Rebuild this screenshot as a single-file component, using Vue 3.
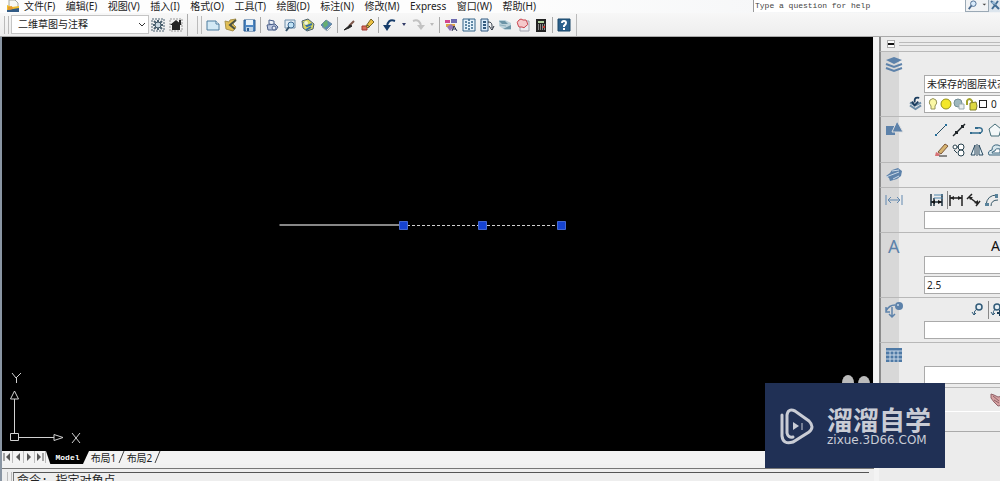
<script setup>
import { ref } from 'vue'

const menus = ['文件(F)', '编辑(E)', '视图(V)', '插入(I)', '格式(O)', '工具(T)', '绘图(D)', '标注(N)', '修改(M)', 'Express', '窗口(W)', '帮助(H)']
const workspace = ref('二维草图与注释')
const layerState = ref('未保存的图层状态')
const question = ref('')
const textHeight = ref('2.5')

const tools = [
  { name: '新建', art: '<path d="M2 4h9l3 3v6H2z" fill="#d3e9f5" stroke="#4d7d9f"/><path d="M11 4v3h3" fill="#fff" stroke="#4d7d9f"/>' },
  { name: '打开', art: '<path d="M2 4l4 1 1-2 6-1-3 5 3 3-3 4-7-2z" fill="#e2bf55" stroke="#a8924a"/><path d="M13 3L7 8l5 4" fill="none" stroke="#4c5244" stroke-width="2"/>' },
  { name: '保存', art: '<path d="M3 3h11v11H3z" fill="#4d86c2" stroke="#285a90"/><path d="M5 3h7v5H5z" fill="#e8f2fa"/><path d="M5 10h7v4H5z" fill="#bdd4e9"/><path d="M6 11h2v3H6z" fill="#285a90"/>' },
  { sep: true },
  { name: '打印', art: '<path d="M5 3l5 1v4L5 7z" fill="#eef3fa" stroke="#495e89"/><path d="M3 8l8-1 3 3-2 3H4z" fill="#b9c5df" stroke="#495e89"/><circle cx="10" cy="11" r="2" fill="#e3e8f3" stroke="#495e89"/>' },
  { name: '打印预览', art: '<path d="M3 3h10v8H3z" fill="#e3edf5" stroke="#6f8faa"/><circle cx="9" cy="8" r="3" fill="#c2e3f5" stroke="#3d6a94"/><path d="M7 10l-3 4" stroke="#35546e" stroke-width="2"/>' },
  { name: '发布', art: '<path d="M2 4l6-2 6 5-1 5-6 2-4-3z" fill="#d7d65d" stroke="#4d6172"/><path d="M4 5l3 4 5-2M6 13l5-3" fill="none" stroke="#356fa5" stroke-width="2"/><circle cx="6" cy="6" r="2" fill="#f4f7d0"/>' },
  { name: '三维 DWF', art: '<path d="M8 3l6 4-6 6-5-5z" fill="#5c8fb2" stroke="#6c87a3"/><path d="M5 6l4-3 1 5-4 3z" fill="#67ae72"/><path d="M4 10l5 4 4-4" fill="none" stroke="#a1b2bd"/>' },
  { sep: true },
  { name: '特性匹配', art: '<path d="M13 4L8 9" stroke="#7b5549" stroke-width="2"/><path d="M9 8l-6 5 5-2 3-2z" fill="#222" stroke="#222"/>' },
  { name: '块编辑器', art: '<path d="M3 9h5v4H3z" fill="#d9705a" stroke="#9f3833"/><path d="M7 9l5-7 3 3-6 6z" fill="#ecc143" stroke="#76662a"/><path d="M8 8l3 2" stroke="#444"/>' },
  { sep: true },
  { name: '放弃', art: '<path d="M13 4c-5-2-8 1-8 6" fill="none" stroke="#163c6a" stroke-width="2"/><path d="M1 8h8l-4 6z" fill="#163c6a"/>' },
  { name: '放弃选项', caret: '#333c68' },
  { name: '重做', art: '<path d="M3 4c5-2 8 1 8 6" fill="none" stroke="#c2c2c2" stroke-width="2"/><path d="M7 8h8l-4 5z" fill="#c2c2c2"/>' },
  { name: '重做选项', caret: '#bbb' },
  { sep: true },
  { name: '特性', art: '<path d="M2 3h5v3H2z" fill="#d24790"/><path d="M8 2h6v4H8z" fill="#6d6ab0"/><path d="M3 7h9v3H3z" fill="#dfa447"/><path d="M4 10l4-3 3 3-4 4z" fill="#9273b8"/><path d="M9 14l2-5 3 5M10 12h3" fill="none" stroke="#2b3150"/>' },
  { name: '设计中心', art: '<path d="M2 2h12v12H2z" fill="#e5f1fa" stroke="#346589"/><path d="M8 2v12M4 5h2M10 5h2M4 8h2M10 8h2M4 11h2M10 11h2" fill="none" stroke="#346589" stroke-width="1.500" stroke-dasharray="2 1"/>' },
  { name: '工具选项板', art: '<path d="M2 2h7v12H2z" fill="#d9eafa" stroke="#31597f"/><path d="M4 5h3M4 8h3M4 11h3" stroke="#31597f" stroke-width="2"/><path d="M9 5c4 0 4 2 4 6M10 9l3 4 2-4" fill="none" stroke="#222b38"/>' },
  { name: '图纸集', art: '<path d="M2 3h6l6 3v7H8l-6-4z" fill="#bdd3db"/><path d="M2 4h6l3 3H5zM6 12h8V8z" fill="#6b94a6"/><path d="M3 8l6 1" stroke="#8fb0bd"/>' },
  { name: '标记集', art: '<path d="M5 4h9v10H5z" fill="#ececf0" stroke="#a2a4af"/><path d="M4 3q2-2 4 0 4-1 4 2 2 3-1 4-2 3-4 1-4 1-4-2-2-3 1-5z" fill="#f5c9cb" stroke="#ca4650"/>' },
  { name: '快速计算器', art: '<path d="M3 2h10v13H3z" fill="#232323"/><path d="M5 4h6v2H5z" fill="#b4d2a2"/><path d="M5 8h7M5 10h7M5 12h7" stroke="#eee" stroke-dasharray="1 1"/><path d="M10 9h2v2h-2z" fill="#c43830"/>' },
  { sep: true },
  { name: '帮助', art: '<path d="M2 2h12v12H2z" fill="#2c608c" stroke="#194668"/><path d="M6 6q0-2 2-2t2 2q0 1-2 3v1M8 11v2" fill="none" stroke="#fff" stroke-width="2"/>' },
]

const drawTools = [
  { name: '直线', art: '<path d="M3 13L13 3" stroke="#274d62"/><path d="M2 12h2v2H2zM12 2h2v2h-2z" fill="#286f9b"/>' },
  { name: '构造线', art: '<path d="M2 14L14 2" stroke="#1f2529" stroke-width="1.500"/><path d="M4 9h3v3H4zM10 3h3v3h-3z" fill="#1f2529"/>' },
  { name: '多段线', art: '<path d="M2 11h9q3-1 2-4-1-2-5-1" fill="none" stroke="#316b8d" stroke-width="1.500"/><path d="M1 10h2v2H1zM6 5h3v2H6zM10 10h2v2h-2z" fill="#316b8d"/>' },
  { name: '正多边形', art: '<path d="M8 2l6 5-2 7H4L2 7z" fill="#f3f7f8" stroke="#456d78"/>' },
]
const modifyTools = [
  { name: '删除', art: '<path d="M5 10l7-8 3 2-7 8z" fill="#d7b470" stroke="#7b5638"/><path d="M3 10l4 2-1 2H2z" fill="#d77275"/><path d="M6 14h8" stroke="#222"/>' },
  { name: '复制', art: '<circle cx="4" cy="5" r="2" fill="#fff" stroke="#27404c"/><circle cx="10" cy="5" r="3" fill="#fff" stroke="#27404c"/><circle cx="10" cy="11" r="3" fill="#fff" stroke="#27404c"/><path d="M3 8l3 3M6 5h2" stroke="#27404c"/>' },
  { name: '镜像', art: '<path d="M6 3v10H2zM10 3v10h4z" fill="#e5f0f5" stroke="#28485e"/><path d="M8 2v12" stroke="#28485e"/>' },
  { name: '偏移', art: '<path d="M2 13q-2-4 3-5 0-6 6-5l4 2v8z" fill="#d7e6ec" stroke="#3c667e"/><path d="M5 11q0-2 3-2 0-3 5-2v4z" fill="#fff" stroke="#3c667e"/>' },
]
const dimTools = [
  { name: '标注', art: '<path d="M2 2v12M13 2v12M5 6v8M2 10h11" fill="none" stroke="#1c2f3d" stroke-width="1.500"/><path d="M5 3h9M5 6h9" stroke="#4e87ae"/><path d="M2 10l4-2v4zM13 10l-4-2v4z" fill="#111"/>' },
  { name: '线性', rule: true, art: '<path d="M2 3v11M14 3v11M2 6h12" fill="none" stroke="#222" stroke-width="1.500"/><path d="M2 6l4-2v4zM14 6l-4-2v4z" fill="#222"/>' },
  { name: '对齐', art: '<path d="M3 5l9 7M1 7l5-5M10 14l4-5" fill="none" stroke="#222" stroke-width="1.500"/><path d="M3 5h4l-3 3zM12 12V8l-4 3z" fill="#222"/>' },
  { name: '弧长', art: '<path d="M2 13Q3 3 13 3M7 14Q7 8 14 8" fill="none" stroke="#385969"/><path d="M1 11h4v3H1zM11 2h3v4h-3z" fill="#58829b"/>' },
]
const tabs = ['布局1', '布局2']
</script>

<template>
  <div class="app">
    <header>
      <nav class="menubar" aria-label="菜单栏">
        <svg class="doc-icon" viewBox="0 0 14 14" aria-hidden="true"><path d="M3 0h6l3 3v6H3z" fill="#f7f8f3" stroke="#a5a79e" /><path d="M1 5l5 2 7-1v6H1z" fill="#eebd2e" /><path d="M1 10l12-2v4H1z" fill="#315b86" /><path d="M2 7l4-1 1 3-5 1z" fill="#e5982d" /></svg>
        <div class="menus"><button v-for="m in menus" :key="m" type="button">{{ m }}</button></div>
        <input v-model="question" class="question" type="text" aria-label="帮助问题" placeholder="Type a question for help">
        <button type="button" class="search" aria-label="搜索"><svg viewBox="0 0 22 12"><circle cx="7" cy="4" r="3" fill="#d9ebfb" stroke="#49698d" /><path d="M5 6L2 10" stroke="#49698d" stroke-width="2" /><path d="M17 4h4l-2 2z" fill="#444" /></svg></button>
        <button type="button" class="comm" aria-label="通讯中心"><svg viewBox="0 0 12 12"><path d="M2 1l8 8M9 1L3 9" stroke="#416c94" stroke-width="2" /><path d="M2 3l3-2 2 4z" fill="#94b7d4" /></svg></button>
      </nav>
      <div class="toolbar">
        <i class="grip"></i>
        <div class="combo">
          <select v-model="workspace" aria-label="工作空间"><option>二维草图与注释</option></select>
          <svg viewBox="0 0 8 6" aria-hidden="true"><path d="M1 1l3 3 3-3" fill="none" stroke="#333" /></svg>
        </div>
        <button type="button" class="tool" aria-label="工作空间设置"><svg viewBox="0 0 16 16"><path d="M2 2h12v12H2z" fill="none" stroke="#4b6170" stroke-dasharray="2 1" /><path d="M4 4l8 8M12 4l-8 8M8 3v10M3 8h10" stroke="#4b6170" stroke-width="2" /><circle cx="8" cy="8" r="3" fill="#c7d6df" stroke="#3d5361" /></svg></button>
        <button type="button" class="tool" aria-label="我的工作空间"><svg viewBox="0 0 16 16"><path d="M2 2h12v12H2z" fill="none" stroke="#999" stroke-dasharray="2 1" /><path d="M8 3l6 5h-2v5H4V8H2z" fill="#252525" /><path d="M11 3h2v4h-2z" fill="#252525" /></svg></button>
        <i class="edge"></i>
        <i class="grip"></i>
        <div class="icons">
          <template v-for="(t, i) in tools" :key="i">
            <i v-if="t.sep" class="sep"></i>
            <button v-else-if="t.caret" type="button" class="caret" :aria-label="t.name"><svg viewBox="0 0 6 4"><path d="M1 0h4L3 3z" :fill="t.caret" /></svg></button>
            <button v-else type="button" class="tool" :aria-label="t.name"><svg viewBox="0 0 16 16" v-html="t.art"></svg></button>
          </template>
        </div>
      </div>
    </header>

    <div class="body">
      <main>
        <div class="canvas">
          <svg class="drawing" viewBox="0 0 300 12" aria-label="直线">
            <path d="M1.500 6h124" stroke="#b5b5b5" stroke-width="1.500" />
            <path d="M129 6.500h154" stroke="#d0d0d0" stroke-dasharray="3 2" />
            <g fill="#1643d0" stroke="#4468d0"><path d="M121.500 2.500h8v8h-8zM200.500 2.500h8v8h-8zM279.500 2.500h8v8h-8z" /></g>
          </svg>
          <svg class="ucs" viewBox="0 0 80 80" aria-label="坐标系">
            <g fill="none" stroke="#d2d2d2">
              <path d="M8.500 62.500h8v7h-8zM12.500 62V28M17 66.500h35M12.500 20l-4 8h8zM52 63.500v6l9-3z" />
              <path d="M10 2l4 5 5-5M14.500 7v5M70 62l8 10M78 62l-8 10" />
            </g>
          </svg>
          <svg class="mark" viewBox="0 0 30 10" aria-hidden="true"><ellipse cx="7" cy="8" rx="6" ry="8" fill="#bbb" /><ellipse cx="23" cy="9" rx="6" ry="8" fill="#bbb" /></svg>
        </div>
        <div class="tabs">
          <button type="button" class="nav" aria-label="第一个"><svg viewBox="0 0 10 10"><path d="M2 1v8" stroke="#555" /><path d="M8 1v8L4 5z" fill="#555" /></svg></button>
          <button type="button" class="nav" aria-label="上一个"><svg viewBox="0 0 10 10"><path d="M7 1v8L3 5z" fill="#555" /></svg></button>
          <button type="button" class="nav" aria-label="下一个"><svg viewBox="0 0 10 10"><path d="M3 1v8l4-4z" fill="#555" /></svg></button>
          <button type="button" class="nav" aria-label="最后一个"><svg viewBox="0 0 10 10"><path d="M2 1v8l4-4z" fill="#555" /><path d="M8 1v8" stroke="#555" /></svg></button>
          <button type="button" class="model">Model</button>
          <template v-for="t in tabs" :key="t">
            <button type="button" class="tab">{{ t }}</button>
            <svg class="slash" viewBox="0 0 7 12" aria-hidden="true"><path d="M1 12L6 0" stroke="#444" /></svg>
          </template>
        </div>
        <div class="command">
          <i class="grip"></i>
          <div class="log">命令: 指定对角点</div>
        </div>
      </main>

      <aside>
        <div class="palette-head">
          <button type="button" aria-label="折叠"></button>
          <i></i>
        </div>
        <section class="layers">
          <svg class="badge" viewBox="0 0 18 16"><path d="M9 1l8 3-8 4-8-4z" fill="#5d82aa" /><path d="M1 8l8 3 8-3M1 12l8 3 8-3" fill="none" stroke="#5d82aa" stroke-width="2" /></svg>
          <div class="content">
            <select v-model="layerState" class="field" aria-label="图层状态"><option>未保存的图层状态</option></select>
            <div class="field layer">
              <svg class="stack" viewBox="0 0 14 14" aria-hidden="true"><path d="M1 6l6 3 6-3M1 9l6 4 6-4" fill="none" stroke="#6d8ea9" stroke-width="2" /><path d="M11 1C6 0 6 2 6 6M3 5l3 4 4-4" fill="none" stroke="#193b5d" stroke-width="2" /></svg>
              <svg viewBox="0 0 12 14"><path d="M4 9Q1 6 3 3q3-3 6 0 2 3-1 6v3H4z" fill="#fbf8a5" stroke="#96945a" /></svg>
              <svg viewBox="0 0 12 14"><circle cx="6" cy="7" r="5" fill="#f3e728" stroke="#93911e" /></svg>
              <svg viewBox="0 0 12 14"><circle cx="5" cy="6" r="4" fill="#9eb7bd" stroke="#748e96" /><path d="M6 7h5v5H6z" fill="#e9edf0" stroke="#9babb0" /></svg>
              <svg viewBox="0 0 12 14"><path d="M1 8V4q2-4 5 0v3" fill="none" stroke="#a3a32c" stroke-width="2" /><path d="M4 6l6-1q2 4 0 8H4z" fill="#ded83f" stroke="#83812b" /></svg>
              <b></b><span>0</span>
            </div>
          </div>
        </section>
        <section class="drawing-tools">
          <svg class="badge" viewBox="0 0 18 16"><path d="M1 5h9v9H1z" fill="#5d82aa" /><path d="M12 0l6 11H7z" fill="#5d82aa" stroke="#dfdfdf" /></svg>
          <div class="content">
            <div class="row"><button v-for="t in drawTools" :key="t.name" type="button" :aria-label="t.name"><svg viewBox="0 0 16 16" v-html="t.art"></svg></button></div>
            <div class="row"><button v-for="t in modifyTools" :key="t.name" type="button" :aria-label="t.name"><svg viewBox="0 0 16 16" v-html="t.art"></svg></button></div>
          </div>
        </section>
        <section class="slim">
          <svg class="badge" viewBox="0 0 18 16"><path d="M1 9l4-3 2-3 6-2 4 3-1 5-4 3-7 2-1-3z" fill="#5d82aa" /><path d="M1 10l13-5M7 4l7-1M8 12l6-3" stroke="#c9d8e7" /></svg>
        </section>
        <section class="dims">
          <svg class="badge" viewBox="0 0 18 16"><path d="M1 3v10M17 3v10M3 8h12M6 5L3 8l3 3M12 5l3 3-3 3" fill="none" stroke="#6289b0" /></svg>
          <div class="content">
            <div class="row"><button v-for="t in dimTools" :key="t.name" type="button" :class="{ rule: t.rule }" :aria-label="t.name"><svg viewBox="0 0 16 16" v-html="t.art"></svg></button></div>
            <select class="field" aria-label="标注样式"><option></option></select>
          </div>
        </section>
        <section class="text">
          <span class="badge letter">A</span>
          <div class="content">
            <button type="button" class="mtext">A</button>
            <select class="field" aria-label="文字样式"><option></option></select>
            <input v-model="textHeight" class="field" type="text" aria-label="文字高度">
          </div>
        </section>
        <section class="leaders">
          <svg class="badge" viewBox="0 0 18 16"><circle cx="14" cy="4" r="4" fill="#5d82aa" /><circle cx="13" cy="3" r="1" fill="#c8d9e8" /><path d="M1 9q3-6 9-6M7 5v10M4 12l3 3 3-3M1 5v5h4" fill="none" stroke="#5d82aa" stroke-width="1.500" /></svg>
          <div class="content">
            <div class="row end">
              <button type="button" aria-label="多重引线"><svg viewBox="0 0 16 16"><circle cx="9" cy="5" r="3" fill="#e5eef4" stroke="#315b78" stroke-width="1.500" /><path d="M7 7q-3 1-3 6M2 10l2 3 2-2" fill="none" stroke="#315b78" /></svg></button>
              <button type="button" class="rule" aria-label="添加引线"><svg viewBox="0 0 16 16"><circle cx="8" cy="5" r="3" fill="#e5eef4" stroke="#315b78" stroke-width="1.500" /><path d="M6 7q-2 2-2 6M2 10l2 3 2-2" fill="none" stroke="#315b78" /><path d="M8 11h6M11 8v6" stroke="#1b3c55" stroke-width="2" /></svg></button>
            </div>
            <select class="field" aria-label="引线样式"><option></option></select>
          </div>
        </section>
        <section class="tables">
          <svg class="badge" viewBox="0 0 18 16"><path d="M1 1h16v14H1z" fill="#4e79a5" /><path d="M1 4h16M1 8h16M1 12h16M5 4v11M9 4v11M13 4v11" stroke="#c9d9e8" /></svg>
          <div class="content"><select class="field" aria-label="表格样式"><option></option></select></div>
        </section>
        <section class="navigate">
          <div class="content"><button type="button" aria-label="平移"><svg viewBox="0 0 16 16"><path d="M1 2l3 1 4 2 5-1v9l-5 1-4-4-3-4z" fill="#d6a1a1" stroke="#906269" /><path d="M3 4l6 5M4 8l5 3" stroke="#906269" /><path d="M10 7l5-3v10l-5-3z" fill="#38414d" /></svg></button></div>
        </section>
        <section class="last"></section>
      </aside>
    </div>

    <div class="watermark">
      <svg viewBox="0 0 36 38" aria-hidden="true"><g fill="none" stroke="#c9ccd5" stroke-linecap="round"><path d="M3 8v21q1 9 11 6l16-10q6-5 0-11L16 4Q9 1 8 8v18q1 5 6 4" stroke-width="3" /></g><path d="M14 15l6 4-6 4z" fill="#c9ccd5" /><path d="M23 16v7" stroke="#c9ccd5" stroke-width="1" /></svg>
      <div><strong>溜溜自学</strong><small>zixue.3D66.COM</small></div>
    </div>
  </div>
</template>

<style>
html, body { overflow: hidden; }
</style>

<style scoped>
* { box-sizing: border-box; }
.app { position: relative; display: flex; flex-direction: column; height: 100vh; overflow: hidden; background: #efefef; color: #222; font: 10px/12px "Noto Sans", "Noto Sans CJK SC", sans-serif; }
button, input, select { margin: 0; padding: 0; border: 0; border-radius: 0; background: none; color: inherit; font: inherit; appearance: none; }
svg { display: block; overflow: visible; flex: none; }
i { flex: none; }
.menubar { display: flex; height: 13px; padding-left: 6px; align-items: flex-start; background: linear-gradient(90deg, #fdfdfd 50%, #f0f2f4); overflow: hidden; white-space: nowrap; }
.menus { display: flex; flex: none; justify-content: space-between; width: 512px; }
.doc-icon { width: 14px; height: 14px; margin-right: 4px; }
.question { width: 212px; height: 12px; margin-left: auto; padding-left: 1px; border-left: 1px solid #999; background: #fff; font: 8px/12px "Liberation Mono", monospace; }
.question::placeholder { color: #444; opacity: 1; }
.search { width: 24px; border: 1px solid #9ba9b5; border-top: 0; }
.comm { width: 11px; background: #dce5ed; overflow: hidden; }
.search svg { width: 22px; height: 11px; }
.comm svg { width: 12px; height: 12px; }
.toolbar { display: flex; align-items: center; height: 24px; padding-left: 4px; background: linear-gradient(#f7f7f7, #ededed); border-bottom: 1px solid #aaa; }
.grip { width: 5px; height: 18px; margin-right: 2px; border: solid #bbb; border-width: 0 1px; }
.combo { position: relative; width: 138px; height: 19px; border: 1px solid #c5c5c5; background: #fff; }
.combo select { width: 100%; height: 17px; padding-left: 6px; line-height: 17px; }
.combo svg { position: absolute; right: 2px; top: 6px; width: 8px; height: 6px; pointer-events: none; }
.tool { flex: none; width: 18px; height: 18px; padding: 1px; }
.tool svg { width: 16px; height: 16px; }
.edge { width: 1px; height: 22px; margin: 0 9px 0 2px; background: #aaa; }
.icons { display: flex; align-items: center; height: 22px; padding-right: 3px; border-right: 1px solid #bbb; }
.icons .sep { width: 1px; height: 16px; margin: 0 2px; background: #aaa; }
.caret { width: 10px; height: 18px; padding: 0 2px; }
.caret svg { width: 6px; height: 4px; }
.body { display: flex; flex: 1; min-height: 0; }
main { display: flex; flex: 1; flex-direction: column; min-width: 0; border-left: 2px solid #8995a3; }
.canvas { position: relative; flex: 1; min-height: 0; margin-right: 1px; background: #000; overflow: hidden; }
.drawing { position: absolute; left: 276px; top: 182px; width: 300px; height: 12px; }
.ucs { position: absolute; left: 0; bottom: 0; width: 80px; height: 80px; }
.mark { position: absolute; right: 2px; bottom: 66px; width: 30px; height: 10px; }
.tabs { display: flex; flex: none; height: 13px; background: #f3f3f3; }
.nav { width: 11px; height: 12px; border-right: 1px solid #bbb; }
.nav svg { width: 10px; height: 10px; }
.model { width: 43px; background: #000; color: #fff; font: bold 8px/12px "Liberation Mono", monospace; clip-path: polygon(0 0, 100% 0, 86% 100%, 10% 100%); }
.tab { width: 29px; white-space: nowrap; }
.slash { width: 7px; height: 12px; }
.command { display: flex; flex: none; height: 17px; padding: 8px 5px 0 5px; background: #eee; box-shadow: inset 0 4px #f1f1f1, inset 0 5px #777; }
.command .grip { height: 12px; margin-right: 1px; }
.log { flex: 1; height: 20px; padding-left: 3px; border-top: 1px solid #555; border-left: 1px solid #777; background: #eee; font: 12px/18px "Liberation Mono", "Noto Sans CJK SC", monospace; white-space: nowrap; }
aside { flex: none; width: 126px; overflow: hidden; border-left: 5px solid #f3f3f3; background: #ececec; }
.palette-head { display: flex; align-items: center; gap: 4px; height: 14px; padding-left: 6px; border-left: 2px solid #8b8b8b; }
.palette-head button { width: 8px; height: 8px; border: 1px solid #aaa; background: linear-gradient(#fff 2px, #111 2px 4px, #fff 4px); }
.palette-head i { flex: 1; height: 4px; border: solid #bbb; border-width: 1px 0; }
section { display: flex; height: 45px; border-top: 1px solid #b8b8b8; border-left: 2px solid #8b8b8b; background: linear-gradient(90deg, #d8d8d8 18px, #ececec 18px); }
.badge { width: 18px; height: 16px; margin: 4px 0 0 4px; }
.content { display: flex; flex: 1; flex-direction: column; justify-content: flex-end; gap: 2px; min-width: 0; padding: 0 0 3px 21px; }
.field { flex: none; width: 100px; height: 18px; padding-left: 2px; border: 1px solid #aaa; background: #fff; line-height: 16px; }
.row { display: flex; gap: 2px; padding-left: 9px; }
.row button { flex: none; width: 16px; height: 18px; }
.row svg { width: 16px; height: 16px; }
.layers { height: 65px; }
.layer { position: relative; display: flex; align-items: center; gap: 1px; }
.layer svg { width: 12px; height: 14px; }
.layer .stack { position: absolute; left: -16px; top: 1px; width: 13px; height: 13px; }
.layer b { width: 8px; height: 8px; border: 1px solid #222; }
.layer span { margin-left: 3px; }
.drawing-tools { height: 46px; }
.slim { height: 25px; }
.row .rule { width: 17px; border-left: 1px solid #888; }
.dims .row { padding-left: 5px; }
.text { height: 65px; }
.letter { padding-left: 3px; color: #5d82aa; font: 18px/18px "Noto Sans", sans-serif; }
.mtext { align-self: flex-end; width: 9px; font-size: 14px; line-height: 16px; color: #111; }
.row.end { padding-left: 46px; }
.navigate { height: 24px; }
.navigate .content { align-items: flex-end; }
.navigate svg { width: 16px; height: 16px; }
.navigate button { margin-right: -6px; }
.navigate, .last { background: #ececec; }
.last { height: 21px; border-color: #fff #fff #aaa #8b8b8b; border-bottom: 1px solid #aaa; }
.watermark { position: absolute; right: 55px; bottom: 13px; display: flex; align-items: center; gap: 12px; width: 180px; height: 85px; padding-left: 14px; background: #203055; color: #c9ccd5; }
.watermark svg { width: 36px; height: 38px; }
.watermark strong, .watermark small { display: block; white-space: nowrap; }
.watermark strong { font: bold 26px/28px "Noto Sans CJK SC", sans-serif; }
.watermark small { font: 12px/14px "DejaVu Sans", sans-serif; }
</style>
